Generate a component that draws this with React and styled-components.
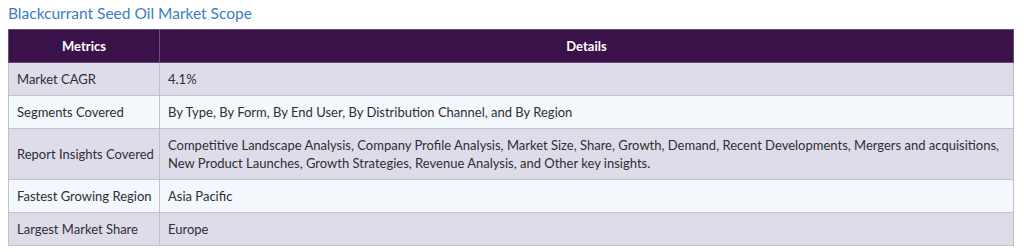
import styled, { createGlobalStyle } from "styled-components";

const GlobalStyle = createGlobalStyle`
  body {
    margin: 0;
    background: #ffffff;
    font-family: Lato, "Open Sans", sans-serif;
  }
`;

const Wrapper = styled.div`
  padding: 3px 10px 0 8px;
`;

const Title = styled.h3`
  margin: 0 0 6px 0;
  font-size: 15.5px;
  font-weight: 400;
  line-height: 20px;
  color: #3d7dc0;
`;

const Table = styled.table`
  width: 100%;
  border-collapse: collapse;
  table-layout: fixed;
  font-size: 13px;
  color: #2e2e33;
`;

const Col = styled.col`
  width: ${(p) => p.$w || "auto"};
`;

const HeadCell = styled.th`
  background: #3a1149;
  color: #ffffff;
  font-weight: 700;
  font-size: 13px;
  text-align: center;
  height: 32px;
  padding: 0 8px;
  border: 1px solid #6a4f78;
`;

const Row = styled.tr`
  background: ${(p) => (p.$alt ? "#f2f8fc" : "#dfdcea")};
`;

const Cell = styled.td`
  padding: 7px 4px 7px 8px;
  line-height: 18px;
  border: 1px solid #c3c0cc;
  vertical-align: middle;
  white-space: ${(p) => (p.$label ? "nowrap" : "normal")};
  overflow: hidden;
`;

const rows = [
  ["Market CAGR", "4.1%"],
  [
    "Segments Covered",
    "By Type, By Form, By End User, By Distribution Channel, and By Region",
  ],
  [
    "Report Insights Covered",
    "Competitive Landscape Analysis, Company Profile Analysis, Market Size, Share, Growth, Demand, Recent Developments, Mergers and acquisitions, New Product Launches, Growth Strategies, Revenue Analysis, and Other key insights.",
  ],
  ["Fastest Growing Region", "Asia Pacific"],
  ["Largest Market Share", "Europe"],
];

export default function App() {
  return (
    <>
      <GlobalStyle />
      <Wrapper>
        <Title>Blackcurrant Seed Oil Market Scope</Title>
        <Table>
          <colgroup>
            <Col $w="151px" />
            <Col />
          </colgroup>
          <thead>
            <tr>
              <HeadCell>Metrics</HeadCell>
              <HeadCell>Details</HeadCell>
            </tr>
          </thead>
          <tbody>
            {rows.map(([k, v], i) => (
              <Row key={k} $alt={i % 2 === 1}>
                <Cell $label>{k}</Cell>
                <Cell>{v}</Cell>
              </Row>
            ))}
          </tbody>
        </Table>
      </Wrapper>
    </>
  );
}
